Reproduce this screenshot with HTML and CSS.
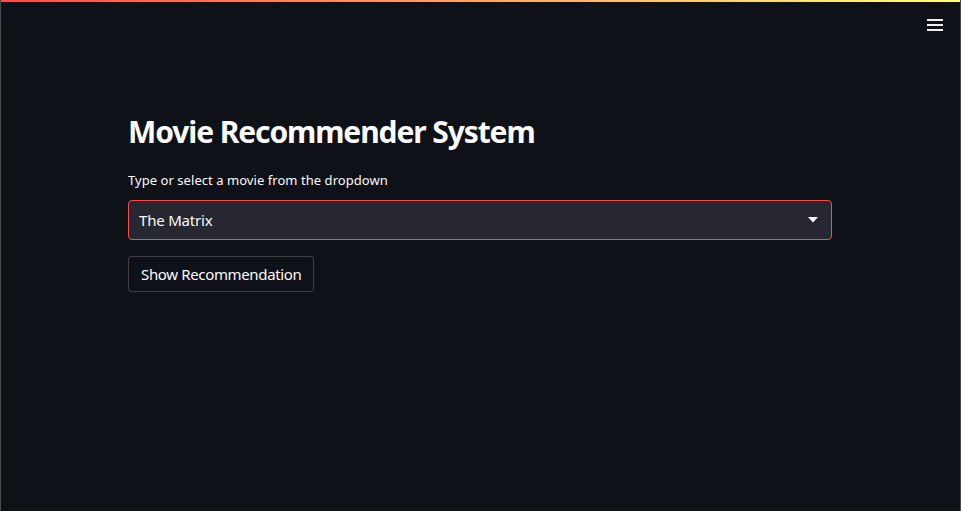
FILE: index.html
```html
<!DOCTYPE html>
<html>
<head>
<meta charset="utf-8">
<link rel="stylesheet" href="styles.css">
</head>
<body>
<div class="app">
  <div class="deco"></div>
  <header class="header">
    <button class="menu" aria-label="menu">
      <svg width="16" height="12" viewBox="0 0 16 12"><rect x="0" y="0" width="16" height="2" fill="#f0f0f0"/><rect x="0" y="5" width="16" height="2" fill="#f0f0f0"/><rect x="0" y="10" width="16" height="2" fill="#f0f0f0"/></svg>
    </button>
  </header>
  <main class="main">
    <h1 class="title">Movie Recommender System</h1>
    <label class="label">Type or select a movie from the dropdown</label>
    <div class="select">
      <span class="value">The Matrix</span>
      <svg class="caret" width="10" height="6" viewBox="0 0 10 6"><path d="M0 0 L10 0 L5 5.5 Z" fill="#fafafa"/></svg>
    </div>
    <div class="btnrow"><button class="btn">Show Recommendation</button></div>
  </main>
</div>
</body>
</html>
```
FILE: styles.css
```css
html, body { margin: 0; padding: 0; height: 100%; background: #0e1117; }
body { font-family: "Noto Sans", "Open Sans", sans-serif; color: #fafafa; }
.app { height: 100%; box-sizing: border-box; border-left: 1px solid #4a4a4a; border-right: 1px solid #4a4a4a; display: flex; flex-direction: column; }
.deco { height: 2px; background: linear-gradient(90deg, #ff4b4b, #ffff80); flex: none; }
.header { height: 44px; display: flex; justify-content: flex-end; align-items: flex-start; padding-right: 17px; }
.menu { background: none; border: none; padding: 0; margin-top: 17px; cursor: pointer; display: flex; }
.main { width: 704px; margin-left: 127px; display: flex; flex-direction: column; }
.title { font-size: 30px; font-weight: 700; margin: 66px 0 0 0; line-height: 40px; letter-spacing: -1.1px; }
.label { font-size: 13px; margin-top: 19px; line-height: 18px; letter-spacing: 0.05px; }
.select { margin-top: 11px; height: 38px; border: 1px solid #ff4b4b; border-radius: 4px; background: #262730; display: flex; align-items: center; justify-content: space-between; padding: 0 13px 0 10px; }
.value { font-size: 15px; letter-spacing: -0.2px; }
.btnrow { margin-top: 16px; display: flex; }
.btn { font-family: inherit; font-size: 15px; color: #fafafa; background: #0e1117; border: 1px solid rgba(250,250,250,0.2); border-radius: 4px; height: 36px; padding: 0 12px; letter-spacing: -0.35px; }
```
